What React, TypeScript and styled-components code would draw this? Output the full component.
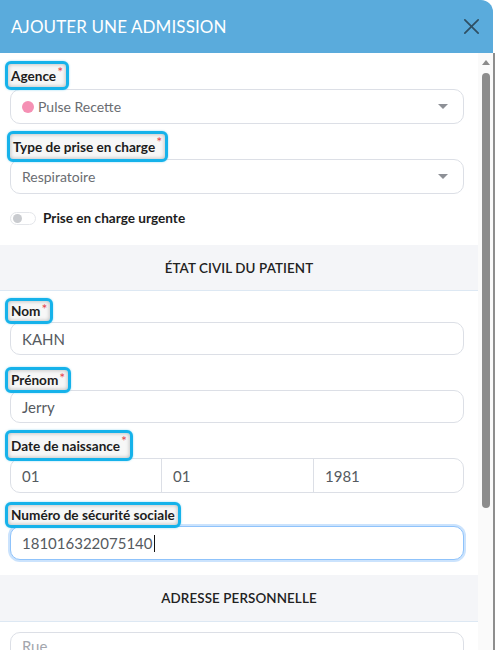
import React from "react";
import styled, { createGlobalStyle } from "styled-components";

const Global = createGlobalStyle`
  html, body { margin: 0; padding: 0; background: #ffffff; }
  body { font-family: Lato, "Noto Sans", sans-serif; }
  * { box-sizing: border-box; }
`;

const Dialog = styled.div`
  width: 495px;
  height: 650px;
  display: flex;
  flex-direction: column;
  overflow: hidden;
`;

const Header = styled.div`
  flex-shrink: 0;
  height: 53px;
  width: 493px;
  background: #5aabdc;
  border-top-right-radius: 12px;
  display: flex;
  align-items: center;
  justify-content: space-between;
  padding: 0 12px 0 11px;
`;

const Title = styled.h1`
  margin: 0;
  font-family: Lato, sans-serif;
  font-weight: 400;
  font-size: 17px;
  letter-spacing: 0.1px;
  color: #ffffff;
`;

const Close = styled.button`
  border: none;
  background: none;
  padding: 0;
  display: flex;
  color: #2f4f63;
`;

const BodyRow = styled.div`
  flex: 1;
  display: flex;
  min-height: 0;
`;

const Content = styled.div`
  width: 478px;
  display: flex;
  flex-direction: column;
  padding-top: 8px;
  overflow: hidden;
  & > * { flex-shrink: 0; }
`;

const Pad = styled.div<{ $mt?: number }>`
  padding: 0 14px 0 10px;
  margin-top: ${(p) => p.$mt ?? 0}px;
  display: flex;
  flex-direction: column;
  & > * { flex-shrink: 0; }
`;

const Field = styled.div<{ $mt?: number }>`
  display: flex;
  flex-direction: column;
  align-items: flex-start;
  margin-top: ${(p) => p.$mt ?? 0}px;
  & > * { flex-shrink: 0; }
`;

const Label = styled.label<{ $h: number; $ml?: number; $ov?: number }>`
  position: relative;
  z-index: 1;
  display: inline-flex;
  align-items: center;
  height: ${(p) => p.$h}px;
  margin-left: ${(p) => (p.$ml ?? -5)}px;
  margin-bottom: -${(p) => p.$ov ?? 2}px;
  padding: 0 3px 0 3px;
  border: 3px solid #16b2ea;
  border-radius: 6px;
  background: #f7f7f7;
  box-shadow: inset 0 0 4px rgba(0, 0, 0, 0.28), 0 0 2px rgba(22, 178, 234, 0.5);
  font-weight: 700;
  font-size: 13.6px;
  color: #1d1d1d;
  white-space: nowrap;
`;

const Star = styled.span`
  color: #e5484d;
  font-size: 14px;
  font-weight: 400;
  margin-left: 1px;
  align-self: flex-start;
  margin-top: 1px;
  line-height: 1;
`;

const InputBox = styled.div<{ $h: number; $focus?: boolean }>`
  width: 454px;
  height: ${(p) => p.$h}px;
  border: 1px solid ${(p) => (p.$focus ? "#8fc3fb" : "#dcdfe6")};
  box-shadow: ${(p) => (p.$focus ? "0 0 0 2px #cbe3fd" : "none")};
  border-radius: 10px;
  display: flex;
  align-items: center;
  padding: 0 11px;
  font-size: 15px;
  color: #555a60;
  background: #fff;
`;

const Placeholder = styled.span`
  color: #a3a6ad;
`;

const SelectText = styled.span`
  flex: 1;
  font-size: 14px;
  color: #6a6d72;
  display: flex;
  align-items: center;
  gap: 4px;
`;

const Dot = styled.span`
  width: 12px;
  height: 12px;
  border-radius: 50%;
  background: #f590b4;
  display: inline-block;
`;

const Caret = styled.span`
  width: 0;
  height: 0;
  border-left: 5px solid transparent;
  border-right: 5px solid transparent;
  border-top: 5px solid #8d9096;
  margin-right: 4px;
`;

const TextCaret = styled.span`
  display: inline-block;
  width: 1px;
  height: 17px;
  background: #111;
  margin-left: 1px;
`;

const DateRow = styled.div`
  width: 454px;
  height: 35px;
  border: 1px solid #dcdfe6;
  border-radius: 10px;
  display: grid;
  grid-template-columns: 151px 152px 1fr;
  overflow: hidden;
`;

const DateCell = styled.div<{ $last?: boolean }>`
  display: flex;
  align-items: center;
  padding-left: 11px;
  font-size: 15px;
  color: #555a60;
  border-right: ${(p) => (p.$last ? "none" : "1px solid #dcdfe6")};
`;

const ToggleRow = styled.div`
  display: flex;
  align-items: center;
  gap: 7px;
  height: 24px;
  margin-top: 12px;
`;

const Track = styled.span`
  width: 26px;
  height: 13px;
  border-radius: 7px;
  border: 1px solid #e4e6ea;
  background: #fff;
  display: flex;
  align-items: center;
  padding-left: 2px;
`;

const Knob = styled.span`
  width: 9px;
  height: 9px;
  border-radius: 50%;
  background: #c9cbcf;
`;

const ToggleLabel = styled.span`
  font-weight: 700;
  font-size: 13.6px;
  color: #1d1d1d;
`;

const Section = styled.div<{ $mt: number; $h: number }>`
  margin-top: ${(p) => p.$mt}px;
  height: ${(p) => p.$h}px;
  background: #f4f5f8;
  border-bottom: 1px solid #dde8f3;
  display: flex;
  align-items: center;
  justify-content: center;
  font-size: 13.4px;
  font-weight: 600;
  color: #222;
  letter-spacing: 0.1px;
`;

const Scrollbar = styled.div`
  width: 15px;
  background: #fafafa;
  display: flex;
  flex-direction: column;
  align-items: center;
  padding-top: 7px;
`;

const ArrowUp = styled.span`
  width: 0;
  height: 0;
  border-left: 4px solid transparent;
  border-right: 4px solid transparent;
  border-bottom: 5px solid #8a8a8a;
`;

const Thumb = styled.div`
  width: 8px;
  height: 435px;
  margin-top: 8px;
  border-radius: 4px;
  background: #8c8c8c;
`;

const Edge = styled.div`
  width: 2px;
  background: #8e8e8e;
`;

export default function App() {
  return (
    <>
      <Global />
      <Dialog>
        <Header>
          <Title>AJOUTER UNE ADMISSION</Title>
          <Close aria-label="Fermer">
            <svg width="19" height="19" viewBox="0 0 20 20" fill="none" stroke="currentColor" strokeWidth="1.8" strokeLinecap="round">
              <path d="M3 3 L17 17 M17 3 L3 17" />
            </svg>
          </Close>
        </Header>
        <BodyRow>
          <Content>
            <Pad>
              <Field>
                <Label $h={29} $ov={1}>Agence<Star>*</Star></Label>
                <InputBox $h={35}>
                  <SelectText><Dot />Pulse Recette</SelectText>
                  <Caret />
                </InputBox>
              </Field>
              <Field $mt={7}>
                <Label $h={31} $ml={-3} $ov={3}>Type de prise en charge<Star>*</Star></Label>
                <InputBox $h={35}>
                  <SelectText>Respiratoire</SelectText>
                  <Caret />
                </InputBox>
              </Field>
              <ToggleRow>
                <Track><Knob /></Track>
                <ToggleLabel>Prise en charge urgente</ToggleLabel>
              </ToggleRow>
            </Pad>
            <Section $mt={15} $h={46}>ÉTAT CIVIL DU PATIENT</Section>
            <Pad $mt={7}>
              <Field>
                <Label $h={26}>Nom<Star>*</Star></Label>
                <InputBox $h={33}>KAHN</InputBox>
              </Field>
              <Field $mt={12}>
                <Label $h={26} $ov={3}>Prénom<Star>*</Star></Label>
                <InputBox $h={33}>Jerry</InputBox>
              </Field>
              <Field $mt={7}>
                <Label $h={31} $ov={3}>Date de naissance<Star>*</Star></Label>
                <DateRow>
                  <DateCell>01</DateCell>
                  <DateCell>01</DateCell>
                  <DateCell $last>1981</DateCell>
                </DateRow>
              </Field>
              <Field $mt={9}>
                <Label $h={26}>Numéro de sécurité sociale</Label>
                <InputBox $h={34} $focus>181016322075140<TextCaret /></InputBox>
              </Field>
            </Pad>
            <Section $mt={15} $h={47}>ADRESSE PERSONNELLE</Section>
            <Pad $mt={10}>
              <InputBox $h={28}><Placeholder>Rue</Placeholder></InputBox>
            </Pad>
          </Content>
          <Scrollbar>
            <ArrowUp />
            <Thumb />
          </Scrollbar>
          <Edge />
        </BodyRow>
      </Dialog>
    </>
  );
}
